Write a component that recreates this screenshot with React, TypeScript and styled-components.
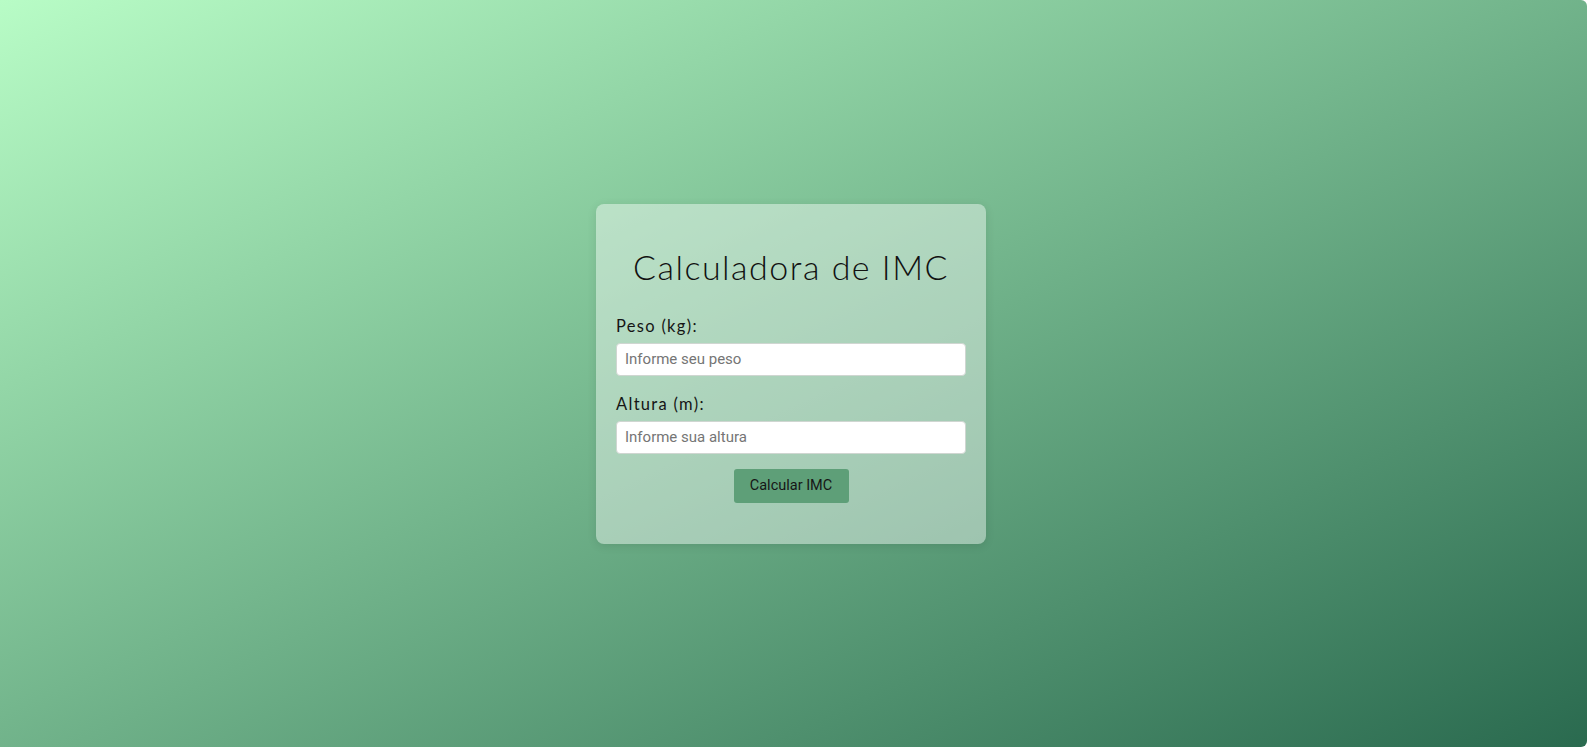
import styled, { createGlobalStyle } from "styled-components"

const GlobalStyle = createGlobalStyle`
  html, body {
    margin: 0;
    padding: 0;
    background: #ffffff;
  }
  * {
    box-sizing: border-box;
  }
`

const Page = styled.div`
  width: 100vw;
  height: 100vh;
  display: flex;
  align-items: center;
  justify-content: center;
  border-radius: 0 6px 6px 0;
  background: linear-gradient(to bottom right, #b8fcc6 0%, #2a6a4f 100%);
  padding-right: 5px;
`

const Card = styled.div`
  width: 390px;
  padding: 43px 20px 41px;
  border-radius: 8px;
  background: rgba(255, 255, 255, 0.42);
  box-shadow: 0 2px 10px rgba(0, 0, 0, 0.1);
  display: flex;
  flex-direction: column;
`

const Title = styled.h1`
  margin: 0 0 27px;
  font-family: "Lato", "Noto Sans", sans-serif;
  font-weight: 300;
  font-size: 34px;
  line-height: 40px;
  letter-spacing: 1.5px;
  text-align: center;
  color: #111;
`

const Label = styled.label`
  display: block;
  font-family: "Lato", "Noto Sans", sans-serif;
  font-weight: 400;
  font-size: 16.5px;
  line-height: 24px;
  letter-spacing: 1.3px;
  color: #151515;
  margin-bottom: 5px;
`

const Field = styled.div<{ $last?: boolean }>`
  margin-bottom: ${(p) => (p.$last ? "15px" : "16px")};
`

const Input = styled.input`
  width: 100%;
  height: 33px;
  padding: 0 8px;
  border: 1px solid #cfd6d1;
  border-radius: 4px;
  background: #fff;
  font-family: "Roboto", "Liberation Sans", sans-serif;
  font-size: 15px;
  color: #222;
  outline: none;

  &::placeholder {
    color: #757575;
  }
`

const Button = styled.button`
  align-self: center;
  width: 115px;
  height: 34px;
  border: none;
  border-radius: 3px;
  background: #5e9f78;
  font-family: "Roboto", "Liberation Sans", sans-serif;
  font-size: 14.5px;
  color: #161616;
  cursor: pointer;
`

export default function App() {
  return (
    <>
      <GlobalStyle />
      <Page>
        <Card>
          <Title>Calculadora de IMC</Title>
          <Field>
            <Label htmlFor="peso">Peso (kg):</Label>
            <Input id="peso" type="text" placeholder="Informe seu peso" />
          </Field>
          <Field $last>
            <Label htmlFor="altura">Altura (m):</Label>
            <Input id="altura" type="text" placeholder="Informe sua altura" />
          </Field>
          <Button>Calcular IMC</Button>
        </Card>
      </Page>
    </>
  )
}
